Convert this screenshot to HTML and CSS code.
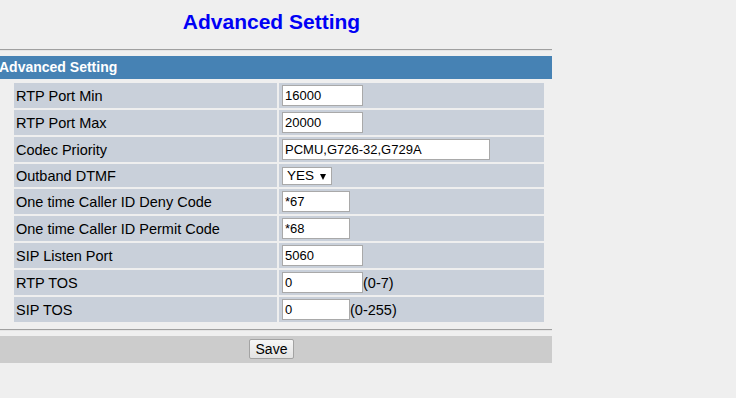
FILE: index.html
```html
<!DOCTYPE html>
<html>
<head>
<meta charset="utf-8">
<title>Advanced Setting</title>
<link rel="stylesheet" href="styles.css">
</head>
<body>
<div class="page">
  <h1 class="title">Advanced Setting</h1>
  <div class="rule"></div>
  <div class="bar">Advanced Setting</div>
  <table class="form">
    <tr>
      <td class="label">RTP Port Min</td>
      <td class="value"><input class="field w-md" type="text" value="16000"></td>
    </tr>
    <tr>
      <td class="label">RTP Port Max</td>
      <td class="value"><input class="field w-md" type="text" value="20000"></td>
    </tr>
    <tr>
      <td class="label">Codec Priority</td>
      <td class="value"><input class="field w-lg" type="text" value="PCMU,G726-32,G729A"></td>
    </tr>
    <tr class="short">
      <td class="label">Outband DTMF</td>
      <td class="value"><span class="select-wrap"><select class="select"><option>YES</option><option>NO</option></select></span></td>
    </tr>
    <tr>
      <td class="label">One time Caller ID Deny Code</td>
      <td class="value"><input class="field w-sm" type="text" value="*67"></td>
    </tr>
    <tr>
      <td class="label">One time Caller ID Permit Code</td>
      <td class="value"><input class="field w-sm" type="text" value="*68"></td>
    </tr>
    <tr>
      <td class="label">SIP Listen Port</td>
      <td class="value"><input class="field w-md" type="text" value="5060"></td>
    </tr>
    <tr>
      <td class="label">RTP TOS</td>
      <td class="value"><input class="field w-md" type="text" value="0"><span class="hint">(0-7)</span></td>
    </tr>
    <tr>
      <td class="label">SIP TOS</td>
      <td class="value"><input class="field w-sm" type="text" value="0"><span class="hint">(0-255)</span></td>
    </tr>
  </table>
  <div class="rule rule-bottom"></div>
  <div class="footer"><button class="btn" type="button">Save</button></div>
</div>
</body>
</html>
```
FILE: styles.css
```css
html, body {
  margin: 0;
  padding: 0;
  background: #efefef;
}

body {
  font-family: "Liberation Sans", Arial, sans-serif;
  color: #000;
}

.page {
  width: 552px;
}

.title {
  margin: 0;
  box-sizing: border-box;
  height: 49px;
  padding: 10px 9px 0 0;
  font-size: 21px;
  line-height: 24px;
  font-weight: bold;
  color: #0000f5;
  text-align: center;
}

.rule {
  height: 0;
  border-top: 1px solid #a0a0a0;
  border-bottom: 1px solid #e4e4e4;
}

.bar {
  margin-top: 5px;
  height: 23px;
  line-height: 23px;
  background: #4682b4;
  color: #fff;
  font-size: 14px;
  font-weight: bold;
  text-indent: -1px;
  white-space: nowrap;
  overflow: hidden;
}

.form {
  margin: 2px 0 0 12px;
  width: 534px;
  border-spacing: 2px;
  border-collapse: separate;
  table-layout: fixed;
}

.form tr {
  height: 25px;
}

.form tr.short {
  height: 23px;
}

.form td {
  background: #c9d0da;
  padding: 0;
  vertical-align: middle;
  font-size: 14.5px;
  white-space: nowrap;
}

.label {
  width: 263px;
  padding-left: 2px !important;
  box-sizing: border-box;
}

.value {
  width: 265px;
  padding-left: 3px !important;
  box-sizing: border-box;
}

.field {
  box-sizing: border-box;
  height: 21px;
  margin: 0;
  padding: 0 2px;
  border: 1px solid #a9a9a9;
  background: #fff;
  font-family: "Liberation Sans", Arial, sans-serif;
  font-size: 13px;
  color: #000;
  vertical-align: middle;
  outline: none;
}

.w-sm { width: 68px; }
.w-md { width: 81px; }
.w-lg { width: 208px; }

.hint {
  vertical-align: middle;
  font-size: 14.5px;
}

.select-wrap {
  position: relative;
  display: inline-block;
  vertical-align: middle;
}

.select-wrap::after {
  content: "";
  position: absolute;
  right: 6px;
  top: 7px;
  border-left: 3.5px solid transparent;
  border-right: 3.5px solid transparent;
  border-top: 6px solid #000;
  pointer-events: none;
}

.select {
  -webkit-appearance: none;
  appearance: none;
  box-sizing: border-box;
  display: block;
  width: 50px;
  height: 18px;
  margin: 0;
  padding: 0 0 0 4px;
  border: 1px solid #a9a9a9;
  border-radius: 0;
  background: #fff;
  font-family: "Liberation Sans", Arial, sans-serif;
  font-size: 13.5px;
  line-height: 16px;
  color: #000;
}

.rule-bottom {
  margin-top: 5px;
}

.footer {
  margin-top: 5px;
  box-sizing: border-box;
  height: 27px;
  padding: 3px 9px 0 0;
  background: #cccccc;
  text-align: center;
}

.btn {
  box-sizing: border-box;
  width: 45px;
  height: 20px;
  margin: 0;
  padding: 0;
  border: 1px solid #a3a3a3;
  border-radius: 2px;
  background: linear-gradient(#f6f6f6, #e3e3e3);
  font-family: "Liberation Sans", Arial, sans-serif;
  font-size: 14px;
  color: #000;
  vertical-align: top;
}
```
